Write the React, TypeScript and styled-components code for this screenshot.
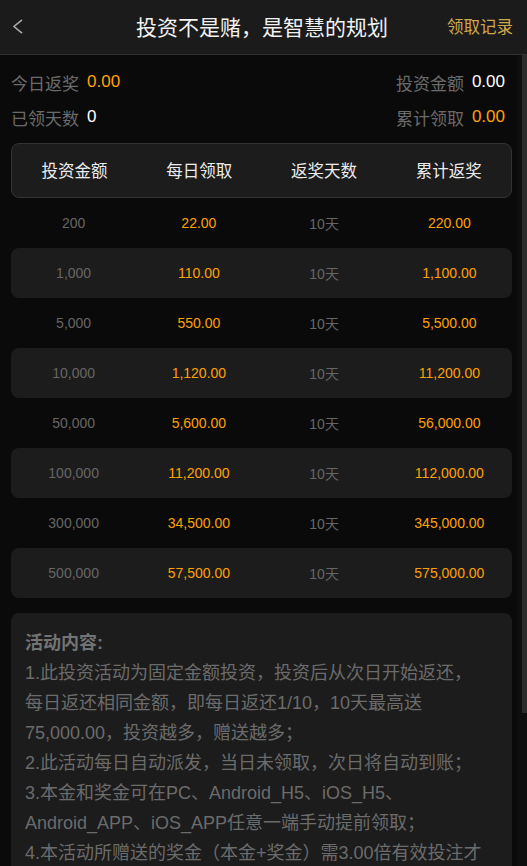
import React from 'react';
import styled, { createGlobalStyle } from 'styled-components';

const GlobalStyle = createGlobalStyle`
  html, body {
    margin: 0;
    padding: 0;
    height: 100%;
    background: #0a0a0a;
    font-family: "Liberation Sans", "Noto Sans CJK SC", sans-serif;
  }
  #root {
    height: 100%;
  }
`;

const rows = [
  { amount: '200', daily: '22.00', total: '220.00' },
  { amount: '1,000', daily: '110.00', total: '1,100.00' },
  { amount: '5,000', daily: '550.00', total: '5,500.00' },
  { amount: '10,000', daily: '1,120.00', total: '11,200.00' },
  { amount: '50,000', daily: '5,600.00', total: '56,000.00' },
  { amount: '100,000', daily: '11,200.00', total: '112,000.00' },
  { amount: '300,000', daily: '34,500.00', total: '345,000.00' },
  { amount: '500,000', daily: '57,500.00', total: '575,000.00' },
];

const rules = [
  '1.此投资活动为固定金额投资，投资后从次日开始返还，每日返还相同金额，即每日返还1/10，10天最高送75,000.00，投资越多，赠送越多；',
  '2.此活动每日自动派发，当日未领取，次日将自动到账；',
  '3.本金和奖金可在PC、Android_H5、iOS_H5、Android_APP、iOS_APP任意一端手动提前领取；',
  '4.本活动所赠送的奖金（本金+奖金）需3.00倍有效投注才能提现，投注不限游戏平台；',
  '5.本活动仅限账号本人进行正常人为操作，禁止租借、使用外挂、机器人、不同账号对赌、互刷、套利等行为，否则将取消或扣除奖励；',
];

const App = () => {
  return (
    <Page>
      <GlobalStyle />
      <Header>
        <BackBtn type="button" aria-label="返回">
          <svg width="13" height="15" viewBox="0 0 13 15" fill="none">
            <path d="M11 0.8 L3 7.5 L11 14.2" stroke="#a8a8a8" strokeWidth="1.6" />
          </svg>
        </BackBtn>
        <Title>投资不是赌，是智慧的规划</Title>
        <RecordLink>领取记录</RecordLink>
      </Header>
      <Content>
        <Body>
          <Summary>
            <SummaryItem>
              <Label>今日返奖</Label>
              <Value $orange>0.00</Value>
            </SummaryItem>
            <SummaryItem>
              <Label>投资金额</Label>
              <Value>0.00</Value>
            </SummaryItem>
            <SummaryItem>
              <Label>已领天数</Label>
              <Value>0</Value>
            </SummaryItem>
            <SummaryItem>
              <Label>累计领取</Label>
              <Value $orange>0.00</Value>
            </SummaryItem>
          </Summary>

          <TableHead>
            <HeadCell>投资金额</HeadCell>
            <HeadCell>每日领取</HeadCell>
            <HeadCell>返奖天数</HeadCell>
            <HeadCell>累计返奖</HeadCell>
          </TableHead>
          {rows.map((r, i) => (
            <Row key={r.amount} $striped={i % 2 === 1}>
              <Cell>{r.amount}</Cell>
              <Cell $orange>{r.daily}</Cell>
              <Cell>10天</Cell>
              <Cell $orange>{r.total}</Cell>
            </Row>
          ))}

          <RulesCard>
            <RulesTitle>活动内容:</RulesTitle>
            {rules.map((t) => (
              <RuleText key={t}>{t}</RuleText>
            ))}
          </RulesCard>
        </Body>
        <ScrollRail>
          <ScrollThumb />
        </ScrollRail>
      </Content>
    </Page>
  );
};

export default App;

const Page = styled.div`
  height: 100vh;
  display: flex;
  flex-direction: column;
  background: #0a0a0a;
`;

const Header = styled.header`
  flex: none;
  height: 54px;
  display: grid;
  grid-template-columns: 1fr auto 1fr;
  align-items: center;
  padding: 0 14px 0 11px;
  background: #1b1b1b;
  border-bottom: 1px solid #303030;
`;

const BackBtn = styled.button`
  width: 30px;
  height: 30px;
  padding: 0;
  margin-top: -2px;
  border: none;
  background: none;
  display: flex;
  align-items: center;
`;

const Title = styled.h1`
  margin: 0 0 2px;
  font-size: 21px;
  font-weight: normal;
  color: #f2f2f2;
`;

const RecordLink = styled.span`
  justify-self: end;
  font-size: 16.5px;
  color: #cfa84c;
  margin-bottom: 2px;
`;

const Content = styled.div`
  flex: 1;
  min-height: 0;
  display: flex;
`;

const Body = styled.main`
  flex: 1;
  overflow-y: auto;
  scrollbar-width: none;
  padding: 16px 5px 40px 11px;

  &::-webkit-scrollbar {
    display: none;
  }
`;

const ScrollRail = styled.div`
  flex: none;
  width: 10px;
  box-sizing: border-box;
  padding-left: 5px;
  background: #0e0e0e;
`;

const ScrollThumb = styled.div`
  height: 658px;
  background: #2b2b2b;
`;

const Summary = styled.div`
  display: grid;
  grid-template-columns: 1fr auto;
  row-gap: 13px;
  padding-right: 7px;
  margin-bottom: 15px;
`;

const SummaryItem = styled.div`
  display: flex;
  align-items: center;
  gap: 8px;
  height: 22px;
  font-size: 17px;
`;

const Label = styled.span`
  color: #6a6a6a;
`;

const Value = styled.span<{ $orange?: boolean }>`
  color: ${(p) => (p.$orange ? '#ffa100' : '#ffffff')};
`;

const TableHead = styled.div`
  display: grid;
  grid-template-columns: repeat(4, 1fr);
  align-items: center;
  height: 55px;
  box-sizing: border-box;
  background: #1c1c1c;
  border: 1px solid #333;
  border-radius: 8px;
`;

const HeadCell = styled.div`
  text-align: center;
  font-size: 16.5px;
  color: #ececec;
  padding-bottom: 1px;
`;

const Row = styled.div<{ $striped?: boolean }>`
  display: grid;
  grid-template-columns: repeat(4, 1fr);
  align-items: center;
  height: 50px;
  border-radius: 8px;
  background: ${(p) => (p.$striped ? '#1c1c1c' : 'transparent')};
`;

const Cell = styled.div<{ $orange?: boolean }>`
  text-align: center;
  font-size: 14px;
  color: ${(p) => (p.$orange ? '#ffa100' : '#666666')};
`;

const RulesCard = styled.section`
  margin-top: 15px;
  padding: 15px 26px 16px 14px;
  background: #1c1c1c;
  border-radius: 8px;
`;

const RulesTitle = styled.div`
  font-size: 18px;
  line-height: 30px;
  font-weight: bold;
  color: #737373;
`;

const RuleText = styled.p`
  margin: 0;
  font-size: 18px;
  line-height: 30px;
  color: #6b6b6b;
  word-break: break-word;
`;
